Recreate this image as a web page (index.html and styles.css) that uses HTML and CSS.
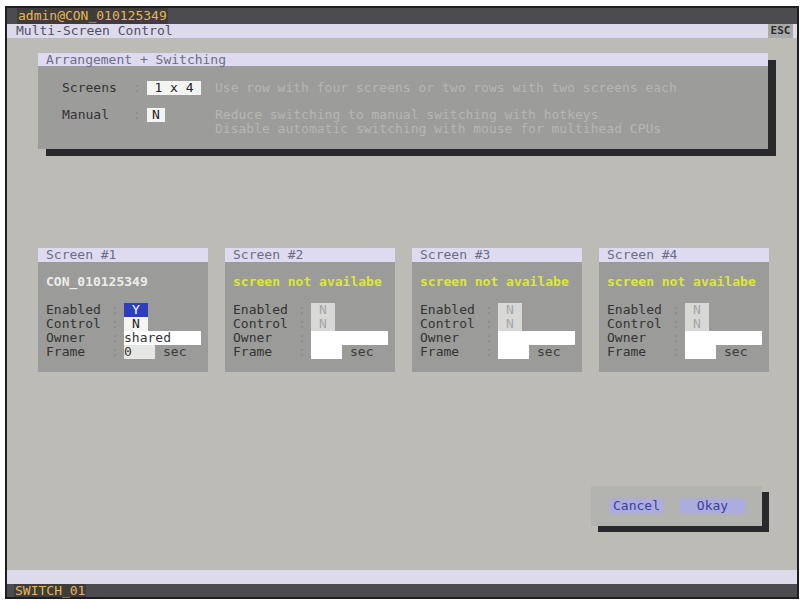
FILE: index.html
```html
<!DOCTYPE html>
<html lang="en">
<head>
    <meta charset="UTF-8">
    <title>Multi-Screen Control</title>
    <link rel="stylesheet" href="styles.css">
</head>
<body>
    <div class="monitor">
        <div class="top-bar"><span class="tag">admin@CON_010125349</span></div>
        <div class="title-bar">
            <span>Multi-Screen Control</span>
            <span class="esc">ESC</span>
        </div>

        <div class="workspace">
            <!-- Arrangement + Switching -->
            <div class="panel arrangement">
                <div class="panel-head">Arrangement + Switching</div>
                <div class="arrangement-body">
                    <span class="label">Screens</span>
                    <span class="colon">:</span>
                    <span class="value"><span class="field wide">1 x 4</span></span>
                    <span class="desc">Use row with four screens or two rows with two screens each</span>

                    <span class="label">Manual</span>
                    <span class="colon">:</span>
                    <span class="value"><span class="field">N</span></span>
                    <span class="desc">Reduce switching to manual switching with hotkeys<br>Disable automatic switching with mouse for multihead CPUs</span>
                </div>
            </div>

            <!-- Screens -->
            <div class="screens">
                <div class="screen">
                    <div class="panel-head">Screen #1</div>
                    <div class="screen-body">
                        <div class="screen-name">CON_010125349</div>
                        <div class="fields">
                            <span class="label">Enabled</span><span class="colon">:</span>
                            <span class="value"><span class="box selected">Y</span></span>
                            <span class="label">Control</span><span class="colon">:</span>
                            <span class="value"><span class="box">N</span></span>
                            <span class="label">Owner</span><span class="colon">:</span>
                            <span class="value"><span class="owner">shared</span></span>
                            <span class="label">Frame</span><span class="colon">:</span>
                            <span class="value"><span class="frame light">0</span><span class="unit">sec</span></span>
                        </div>
                    </div>
                </div>

                <div class="screen">
                    <div class="panel-head">Screen #2</div>
                    <div class="screen-body">
                        <div class="screen-name missing">screen not availabe</div>
                        <div class="fields">
                            <span class="label">Enabled</span><span class="colon">:</span>
                            <span class="value"><span class="box off">N</span></span>
                            <span class="label">Control</span><span class="colon">:</span>
                            <span class="value"><span class="box off">N</span></span>
                            <span class="label">Owner</span><span class="colon">:</span>
                            <span class="value"><span class="owner"></span></span>
                            <span class="label">Frame</span><span class="colon">:</span>
                            <span class="value"><span class="frame"></span><span class="unit">sec</span></span>
                        </div>
                    </div>
                </div>

                <div class="screen">
                    <div class="panel-head">Screen #3</div>
                    <div class="screen-body">
                        <div class="screen-name missing">screen not availabe</div>
                        <div class="fields">
                            <span class="label">Enabled</span><span class="colon">:</span>
                            <span class="value"><span class="box off">N</span></span>
                            <span class="label">Control</span><span class="colon">:</span>
                            <span class="value"><span class="box off">N</span></span>
                            <span class="label">Owner</span><span class="colon">:</span>
                            <span class="value"><span class="owner"></span></span>
                            <span class="label">Frame</span><span class="colon">:</span>
                            <span class="value"><span class="frame"></span><span class="unit">sec</span></span>
                        </div>
                    </div>
                </div>

                <div class="screen">
                    <div class="panel-head">Screen #4</div>
                    <div class="screen-body">
                        <div class="screen-name missing">screen not availabe</div>
                        <div class="fields">
                            <span class="label">Enabled</span><span class="colon">:</span>
                            <span class="value"><span class="box off">N</span></span>
                            <span class="label">Control</span><span class="colon">:</span>
                            <span class="value"><span class="box off">N</span></span>
                            <span class="label">Owner</span><span class="colon">:</span>
                            <span class="value"><span class="owner"></span></span>
                            <span class="label">Frame</span><span class="colon">:</span>
                            <span class="value"><span class="frame"></span><span class="unit">sec</span></span>
                        </div>
                    </div>
                </div>
            </div>

            <!-- Cancel / Okay -->
            <div class="actions">
                <span class="btn">Cancel</span>
                <span class="btn okay">Okay</span>
            </div>
        </div>

        <div class="status-bar"></div>
        <div class="bottom-bar"><span class="tag">SWITCH_01</span></div>
    </div>
</body>
</html>
```

FILE: styles.css
```css
body {
    margin: 0;
    background: #ffffff;
    font-family: "DejaVu Sans Mono", "Liberation Mono", monospace;
    font-size: 13px;
}

.monitor {
    margin: 6px 0 0 5px;
    width: 790px;
    height: 589px;
    border: 2px solid #1e1e20;
    display: flex;
    flex-direction: column;
    background: #bdbbb5;
}

.top-bar {
    height: 16px;
    background: #4b4b50;
    padding-left: 10px;
    line-height: 16px;
}
.tag {
    display: inline-block;
    color: #e6b45c;
    background: #403c3a;
    padding: 0 1px;
}

.title-bar {
    height: 14px;
    line-height: 14px;
    background: #dddaeb;
    color: #4f4f66;
    padding-left: 9px;
    display: flex;
    justify-content: space-between;
}
.esc {
    background: #a9a9a7;
    color: #2a2a2a;
    width: 25px;
    margin-right: 4px;
    font-size: 11px;
    font-weight: bold;
    text-align: center;
}

.workspace {
    flex: 1;
    padding: 15px 0 0 31px;
    display: flex;
    flex-direction: column;
}

.panel-head {
    height: 14px;
    line-height: 14px;
    background: #dedaf0;
    color: #6c6c88;
    padding-left: 8px;
}

/* Arrangement + Switching */
.arrangement {
    width: 730px;
    box-shadow: 8px 7px 0 #2a2a2c;
}
.arrangement .panel-head {
    height: 13px;
    line-height: 13px;
}
.arrangement-body {
    background: #9c9c9a;
    height: 68px;
    padding: 15px 0 0 24px;
    display: grid;
    grid-template-columns: 71px 14px 68px 1fr;
    grid-auto-rows: min-content;
    row-gap: 13px;
    line-height: 14px;
}
.label {
    color: #333333;
}
.colon {
    color: #8a8a8a;
}
.desc {
    color: #b6b6b4;
}
.field {
    display: inline-block;
    background: #f4f4f2;
    color: #222;
    padding: 0 5px;
    height: 14px;
}
.field.wide {
    width: 44px;
    text-align: center;
}

/* Screen panels */
.screens {
    margin-top: 99px;
    width: 731px;
    display: grid;
    grid-template-columns: repeat(4, 1fr);
    column-gap: 17px;
}
.screen-body {
    background: #9b9b99;
    height: 97px;
    padding: 13px 0 0 8px;
    line-height: 14px;
}
.screen-name {
    color: #ececec;
    font-weight: bold;
    height: 14px;
    margin-bottom: 14px;
}
.screen-name.missing {
    color: #dde63a;
}
.fields {
    display: grid;
    grid-template-columns: 65px 13px 1fr;
    grid-auto-rows: 14px;
}
.value {
    display: flex;
}
.box {
    width: 24px;
    height: 14px;
    background: #f4f4f2;
    color: #222;
    text-align: center;
}
.box.selected {
    background: #2d3fb8;
    color: #ffffff;
}
.box.off {
    background: #d8d8d6;
    color: #a6a6a6;
}
.owner {
    width: 77px;
    height: 14px;
    background: #ffffff;
    color: #333;
}
.frame {
    width: 31px;
    height: 14px;
    background: #ffffff;
    color: #333;
}
.frame.light {
    background: #e6e6e4;
}
.unit {
    color: #3a3a3a;
    margin-left: 8px;
}

/* Cancel / Okay */
.actions {
    align-self: flex-start;
    margin: 114px 0 0 553px;
    width: 171px;
    height: 40px;
    background: #b3b3b0;
    box-shadow: 7px 6px 0 #2a2a2c;
    display: flex;
    align-items: center;
    gap: 17px;
    padding-left: 19px;
    box-sizing: border-box;
}
.btn {
    background: #acacdf;
    color: #3e3e98;
    height: 14px;
    line-height: 14px;
    padding: 0 2px;
    width: 49px;
    text-align: center;
    box-shadow: 0 0 3px #acacdf;
}
.btn.okay {
    width: 61px;
}

.status-bar {
    height: 14px;
    background: #dddaeb;
}
.bottom-bar {
    height: 13px;
    line-height: 13px;
    background: #4b4b50;
    padding-left: 7px;
}
```
